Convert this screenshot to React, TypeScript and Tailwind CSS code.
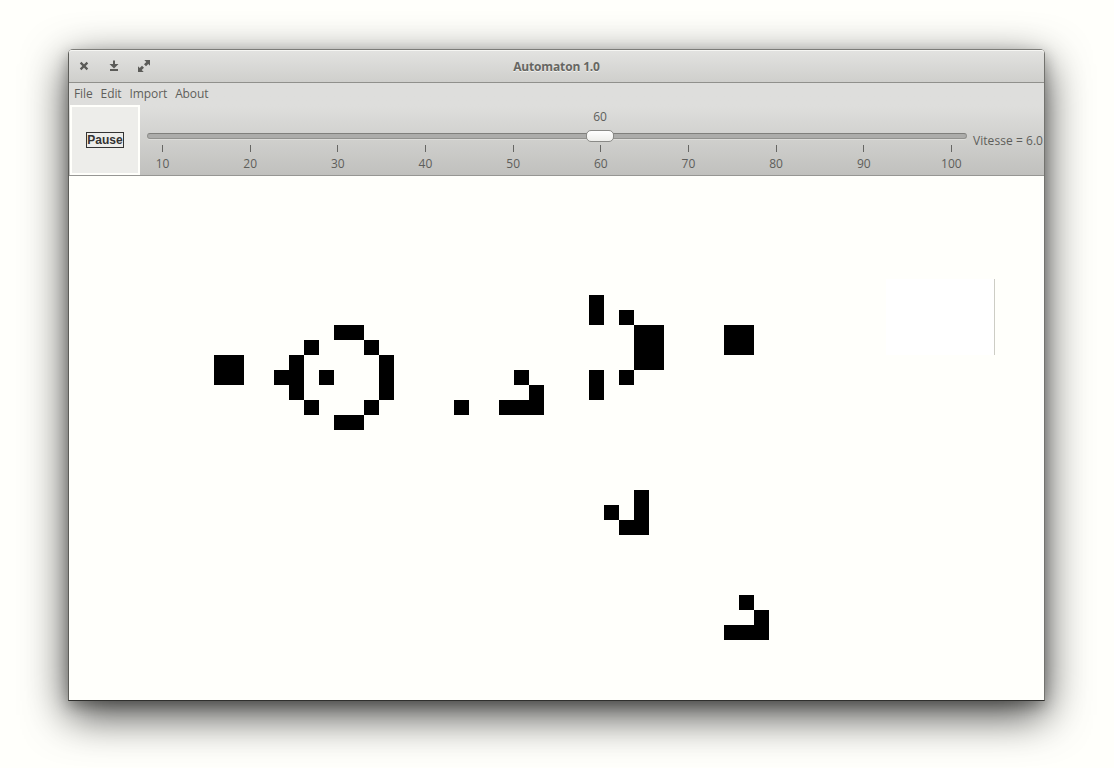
const cells: [number, number, number, number][] = [
  // [column, row, width, height], in cells
  [9, 12, 2, 2],
  [13, 13, 1, 1],
  [14, 12, 1, 3],
  [15, 11, 1, 1],
  [15, 15, 1, 1],
  [16, 13, 1, 1],
  [17, 10, 2, 1],
  [17, 16, 2, 1],
  [19, 11, 1, 1],
  [19, 15, 1, 1],
  [20, 12, 1, 3],
  [25, 15, 1, 1],
  [28, 15, 3, 1],
  [29, 13, 1, 1],
  [30, 14, 1, 1],
  [34, 8, 1, 2],
  [34, 13, 1, 2],
  [36, 9, 1, 1],
  [36, 13, 1, 1],
  [37, 10, 2, 3],
  [43, 10, 2, 2],
  [35, 22, 1, 1],
  [36, 23, 2, 1],
  [37, 21, 1, 2],
  [44, 28, 1, 1],
  [45, 29, 1, 1],
  [43, 30, 3, 1],
];

const ticks = [10, 20, 30, 40, 50, 60, 70, 80, 90, 100];

function TitleBar() {
  return (
    <header className="grid h-[33px] shrink-0 grid-cols-[1fr_auto_1fr] items-center rounded-t-[3px] border-b border-[#90908c] bg-linear-to-b from-[#e3e3e1] to-[#cfcfcc] shadow-[inset_0_1px_0_#f6f6f3]">
      <div className="flex items-center gap-[16px] pl-2 text-[#5b5b58]">
        <svg className="h-[14px] w-[14px]" viewBox="0 0 14 14" fill="none" stroke="currentColor" strokeWidth="2.2">
          <path d="M3.6 3.6l6.8 6.8M10.4 3.6l-6.8 6.8" />
        </svg>
        <svg className="h-[14px] w-[14px]" viewBox="0 0 14 14" fill="currentColor">
          <path d="M6 1.500h2V5h3.500L7 9.500 2.500 5H6zM3 10h8v2H3z" />
        </svg>
        <svg className="h-[14px] w-[14px]" viewBox="0 0 14 14" fill="currentColor">
          <path d="M7.300 1H13v5.700l-1.700-1.700-2.300 2.300-2-2L9.300 3zM1 7.300l1.700 1.700L5 6.700l2 2L4.700 11l2 2H1z" />
        </svg>
      </div>
      <h1 className="pt-[2px] text-[12px] leading-4 font-bold tracking-[-0.15px] text-[#666662] [text-shadow:0_1px_0_#f0f0ed]">
        Automaton 1.0
      </h1>
      <span />
    </header>
  );
}

function MenuBar() {
  return (
    <nav className="flex h-[22px] shrink-0 items-center gap-2 pl-[5px] text-[12px] leading-4 tracking-[-0.1px]">
      <span>File</span>
      <span>Edit</span>
      <span>Import</span>
      <span>About</span>
    </nav>
  );
}

function Slider() {
  return (
    <div className="flex w-[820px] shrink-0 flex-col pt-1">
      <div className="ml-[438px] flex h-4 w-[30px] items-center justify-center text-[12px] leading-4">60</div>
      <div className="mt-1 flex h-[14px] items-center">
        <div className="flex h-[6px] w-full items-center rounded-full border border-[#92928f] border-t-[#7f7f7c] bg-[#acacaa] shadow-[0_1px_0_#ddddda]">
          <div className="ml-[438px] h-[12px] w-[28px] rounded-[5px] border border-[#8a8a87] bg-linear-to-b from-white to-[#eeeeeb]" />
        </div>
      </div>
      <div className="ml-[15.500px] flex w-[789px] justify-between pt-[2px] text-[12px]">
        {ticks.map((n) => (
          <div key={n} className="flex w-0 flex-col items-center">
            <span className="h-[7px] w-px shrink-0 bg-[#666663]" />
            <span className="mt-1 leading-4">{n}</span>
          </div>
        ))}
      </div>
    </div>
  );
}

function Toolbar() {
  return (
    <div className="flex h-[71px] shrink-0 border-b border-[#969693]">
      <button className="ml-px flex h-[70px] w-[70px] shrink-0 items-center justify-center border-2 border-[#fffffb] bg-[#ededea]">
        <span className="flex h-4 w-[38px] items-center justify-center border border-[#333] font-['Liberation_Sans',sans-serif] text-[12px] leading-3 font-bold text-[#333]">
          Pause
        </span>
      </button>
      <div className="ml-[7px] flex">
        <Slider />
        <span className="ml-[6px] pt-[28px] text-[12px] leading-4 tracking-[0.05px] whitespace-nowrap">Vitesse = 6.0</span>
      </div>
    </div>
  );
}

function Board() {
  return (
    <div className="flex-1 overflow-hidden bg-[#fffffb]">
      <svg className="block h-[524px] w-[975px]" viewBox="0 0 975 524" shapeRendering="crispEdges">
        <rect x="817" y="103" width="109" height="76" fill="#ffffff" />
        <rect x="925" y="103" width="1" height="76" fill="#cdcdc5" />
        {cells.map(([x, y, w, h]) => (
          <rect key={`${x}-${y}`} x={10 + x * 15} y={y * 15 - 1} width={w * 15} height={h * 15} />
        ))}
      </svg>
    </div>
  );
}

export default function App() {
  return (
    <main className="h-[768px] w-[1114px] overflow-hidden bg-[#fffffb] pt-[49px] pl-[68px] font-['Open_Sans',sans-serif] text-[#5e5e5b]">
      <div className="flex h-[652px] w-[977px] flex-col rounded-t-[5px] border border-t-[#7c7c78] border-r-[#73736f] border-b-[#30302e] border-l-[#5d5d59] bg-[#fffffb] shadow-[0_14px_44px_rgba(0,0,0,0.75),0_5px_14px_rgba(0,0,0,0.25)]">
        <TitleBar />
        <div className="flex h-[93px] shrink-0 flex-col bg-linear-to-b from-[#dededc] from-25% to-[#c0c0bd]">
          <MenuBar />
          <Toolbar />
        </div>
        <Board />
      </div>
    </main>
  );
}
